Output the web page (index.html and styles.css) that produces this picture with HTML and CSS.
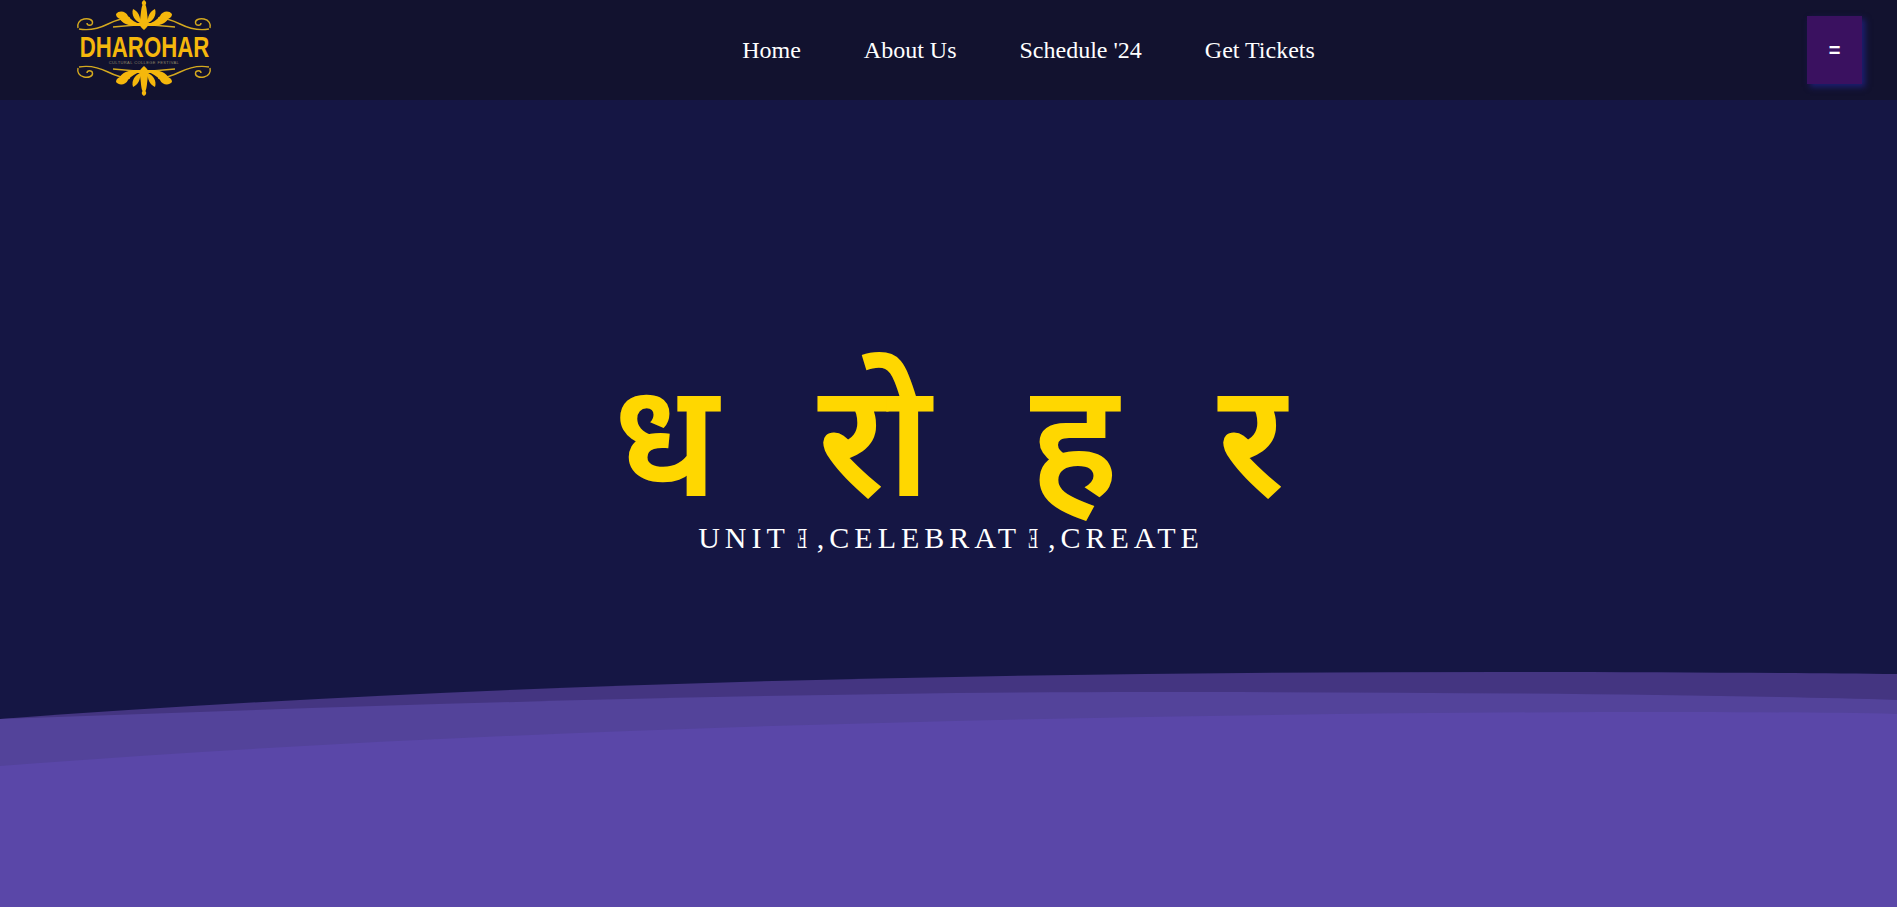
FILE: index.html
```html
<!DOCTYPE html>
<html lang="en">
<head>
<meta charset="utf-8">
<title>Dharohar</title>
<link rel="stylesheet" href="styles.css">
</head>
<body>
<svg class="defs" width="0" height="0" aria-hidden="true">
  <defs>
    <g id="half">
      <g fill="none" stroke="#d4a91f" stroke-width="1.4">
        <path d="M2 28C1 24 3 20 8 19 13 18 17 20 16.5 23 16 26 11 26 11 23"/>
        <path d="M3 29C14 31 24 28 32 24 40 20 46 18 54 18"/>
        <path d="M37 27L60 25"/>
      </g>
      <g fill="#f5b70c">
        <path d="M40 14C43 10 50 11 52 16 55 20 60 23 65 24L60 26C52 26 46 23 44 19 42 18 40 17 40 14Z"/>
        <path d="M57 9C62 11 65 17 64 23 59 21 55 15 57 9Z"/>
      </g>
    </g>
    <g id="ornament">
      <use href="#half"/>
      <use href="#half" transform="matrix(-1 0 0 1 136 0)"/>
      <path fill="#f5b70c" d="M68 0C70 1 71 3 69.5 5 71 8 71 14 72 20 72.5 24 73 26 68 30 63 26 63.5 24 64 20 65 14 65 8 66.5 5 65 3 66 1 68 0Z"/>
      <path fill="#f5b70c" d="M56 23H80V26H56Z"/>
    </g>
  </defs>
</svg>
<header class="navbar">
  <a class="logo" href="#">
    <svg class="flourish" viewBox="0 0 136 33" width="136" height="33" aria-hidden="true"><use href="#ornament"/></svg>
    <span class="wordmark">DHAROHAR</span>
    <span class="tagline">CULTURAL COLLEGE FESTIVAL</span>
    <svg class="flourish flourish-bottom" viewBox="0 0 136 33" width="136" height="33" aria-hidden="true"><use href="#ornament" transform="matrix(1 0 0 -1 0 33)"/></svg>
  </a>
  <nav class="nav-links">
    <a href="#">Home</a>
    <a href="#">About Us</a>
    <a href="#">Schedule '24</a>
    <a href="#">Get Tickets</a>
  </nav>
  <button class="menu-btn" type="button">=</button>
</header>
<main class="hero">
  <div class="hero-text">
    <h1 class="title">धरोहर</h1>
    <p class="subtitle">UNIT<span class="rev-e">&#x18E;</span>,CELEBRAT<span class="rev-e">&#x18E;</span>,CREATE</p>
  </div>
  <svg class="waves" viewBox="0 0 1897 235" preserveAspectRatio="none" aria-hidden="true">
    <path fill="#443581" d="M0 47C500 10 1000 0 1500 0 1650 0 1800 1 1897 2V235H0Z"/>
    <path fill="#53439a" d="M0 47C400 32 800 20 1150 20 1400 20 1700 22 1897 28V235H0Z"/>
    <path fill="#5a47a8" d="M0 94C500 55 1100 42 1600 40 1700 40 1820 40 1897 42V235H0Z"/>
  </svg>
</main>
</body>
</html>
```
FILE: styles.css
```css
* { box-sizing: border-box; }
html, body { margin: 0; height: 100%; }
body {
  background: #151644;
  font-family: "Liberation Serif", serif;
  overflow: hidden;
  display: flex;
  flex-direction: column;
  height: 907px;
}
.defs { position: absolute; }
.navbar {
  height: 100px;
  flex: none;
  background: #12122f;
  display: grid;
  grid-template-columns: 1fr auto 1fr;
  align-items: center;
  padding: 0 35px 0 76px;
}
.logo {
  display: flex;
  flex-direction: column;
  align-items: center;
  width: 136px;
  text-decoration: none;
  height: 100px;
  justify-self: start;
}
.flourish { display: block; flex: none; }
.flourish-bottom { margin-top: -3px; }
.wordmark {
  font-family: "Liberation Sans", sans-serif;
  font-weight: 700;
  font-size: 30px;
  line-height: 26px;
  color: #f5b70c;
  white-space: nowrap;
  margin-top: 1px;
  transform: scaleX(0.74);
}
.tagline {
  font-family: "Liberation Sans", sans-serif;
  font-size: 4px;
  line-height: 6px;
  letter-spacing: 0.4px;
  color: #8d8668;
  white-space: nowrap;
}
.nav-links {
  display: flex;
  gap: 63px;
  font-size: 24px;
  margin-left: 119px;
}
.nav-links a { color: #fff; text-decoration: none; }
.menu-btn {
  justify-self: end;
  width: 55px;
  height: 68px;
  border: 0;
  background: #3a1160;
  color: #fff;
  font-family: "Liberation Sans", sans-serif;
  font-size: 20px;
  font-weight: 700;
  box-shadow: 3px 3px 6px #1d1f74;
}
.hero {
  position: relative;
  flex: 1;
  display: flex;
  justify-content: center;
}
.hero-text {
  text-align: center;
  padding-top: 248px;
  position: relative;
  z-index: 1;
}
.title {
  margin: 0;
  padding-left: 101px;
  font-family: "Noto Sans", "Noto Sans Devanagari", sans-serif;
  font-size: 160px;
  line-height: 172px;
  font-weight: 600;
  color: #ffd700;
  letter-spacing: 99px;
}
.subtitle {
  margin: 0;
  padding-left: 5px;
  font-size: 30px;
  line-height: 36px;
  letter-spacing: 5px;
  color: #fff;
}
.rev-e {
  display: inline-block;
  width: 27px;
  transform: scaleX(0.55);
}
.waves {
  position: absolute;
  left: 0;
  bottom: 0;
  width: 100%;
  height: 235px;
  display: block;
}
```
